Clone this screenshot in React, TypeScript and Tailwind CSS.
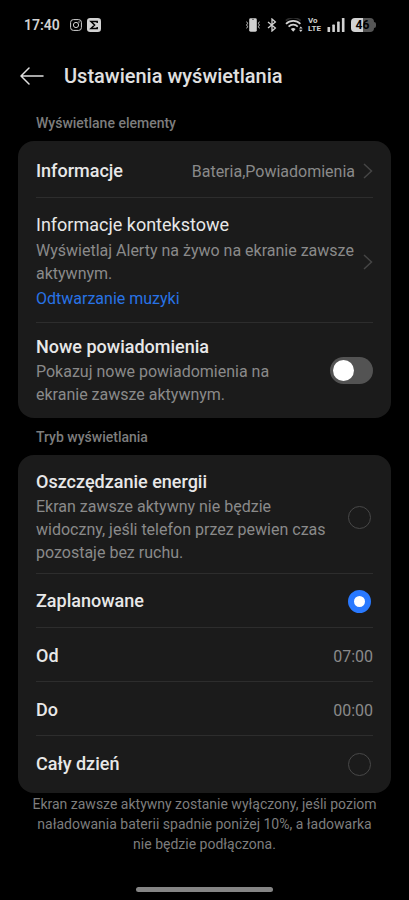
import React, { useState } from 'react';

type DisplayMode = 'saving' | 'scheduled' | 'allDay';

const TITLE = 'text-[18px] leading-6 text-[#e8e8e8]';
const DESC = 'text-[16px] leading-[23px] text-[#8a8a8a]';
const DIVIDER = 'border-b border-[#2d2d2d]';

function Chevron() {
  return (
    <svg viewBox="0 0 10 16" className="h-4 w-[10px] shrink-0" fill="none" stroke="#454545" strokeWidth="1.5" aria-hidden="true">
      <path d="M1 1l7.5 7L1 15" />
    </svg>
  );
}

function StatusBar() {
  return (
    <div className="flex h-[49px] items-center justify-between pl-6 pr-[33px] text-[#d2d2d2]">
      <div className="flex items-center">
        <span className="text-[14px] leading-5 font-semibold">17:40</span>
        <svg viewBox="0 0 12 12" className="ml-[10px] size-3" fill="none" stroke="currentColor" aria-label="Instagram">
          <rect x="0.6" y="0.6" width="10.8" height="10.8" rx="2.8" strokeWidth="1" />
          <circle cx="6" cy="6" r="2.6" strokeWidth="1" />
          <circle cx="9" cy="3" r="0.7" fill="currentColor" stroke="none" />
        </svg>
        <svg viewBox="0 0 14 14" className="ml-[5px] size-[14px]" aria-hidden="true">
          <rect width="14" height="14" rx="3.2" fill="currentColor" />
          <path d="M10.2 5V3.6H4L7.6 7 4 10.4h6.2V9" fill="none" stroke="#000" strokeWidth="1.5" />
        </svg>
      </div>

      <div className="flex items-center">
        <svg viewBox="0 0 14 14" className="h-[14px] w-[14px]" fill="none" stroke="currentColor" aria-label="Wibracje">
          <rect x="3.2" y="0.3" width="7.6" height="13.4" rx="1.4" fill="currentColor" stroke="none" />
          <path d="M6 1.4h2" stroke="#555" strokeWidth="0.8" />
          <path d="M0.6 3.6l1 1.7-1 1.7 1 1.7-1 1.7M13.4 3.6l-1 1.7 1 1.7-1 1.7 1 1.7" strokeWidth="0.9" />
        </svg>
        <svg viewBox="0 0 10 14" className="ml-[7px] h-[14px] w-[10px]" fill="none" stroke="currentColor" strokeWidth="1.3" aria-label="Bluetooth">
          <path d="M1 4l7.4 6L5 13V1l3.4 3L1 10" />
        </svg>
        <svg viewBox="0 0 18 14" className="ml-[8px] h-[14px] w-[18px]" fill="none" stroke="currentColor" aria-label="Wi-Fi">
          <path d="M0.8 2.6a11.4 11.4 0 0 1 14.8 0" stroke="#2c2c2c" strokeWidth="1.5" />
          <path d="M1 5.8a10.4 10.4 0 0 1 14.4 0" strokeWidth="1.7" />
          <path d="M3.6 8.6a6.5 6.5 0 0 1 9.2 0" strokeWidth="1.7" />
          <path d="M5.8 11a3.6 3.6 0 0 1 4.8 0L8.2 13.8z" fill="currentColor" stroke="none" />
          <path d="M14 10.6l1.8-2.2 1.8 2.2zM14 11.8l1.8 2.2 1.8-2.2z" fill="currentColor" stroke="none" />
        </svg>
        <span className="ml-[5px] flex w-[14px] flex-col text-[8px] leading-[8px] font-bold">
          <span>Vo</span>
          <span>LTE</span>
        </span>
        <svg viewBox="0 0 18 14" className="ml-[5px] h-[14px] w-[18px]" fill="currentColor" aria-label="Zasięg">
          <rect x="0.5" y="9" width="2.6" height="5" rx="0.6" />
          <rect x="5.3" y="6.6" width="2.6" height="7.4" rx="0.6" />
          <rect x="10.1" y="3.6" width="2.6" height="10.4" rx="0.6" />
          <rect x="14.9" y="0" width="2.6" height="14" rx="0.6" />
        </svg>
        <div className="ml-[6px] flex items-center">
          <div className="flex h-[14px] w-[23px] items-center justify-center rounded-[4px] bg-linear-to-r from-[#d2d2d2] from-50% to-[#555555] to-50% text-[12px] leading-[14px] font-bold text-black">
            46
          </div>
          <div className="h-[6px] w-[2px] rounded-r-[2px] bg-[#555555]" />
        </div>
      </div>
    </div>
  );
}

interface RadioRowProps {
  id: DisplayMode;
  title: string;
  description?: string;
  checked: boolean;
  onSelect: (id: DisplayMode) => void;
  className: string;
}

function RadioRow({ id, title, description, checked, onSelect, className }: RadioRowProps) {
  return (
    <label htmlFor={id} className={`${className} flex items-center justify-between gap-4`}>
      <span className="flex flex-col">
        <span className={`${TITLE} font-medium`}>{title}</span>
        {description && <span className={`${DESC} mt-px`}>{description}</span>}
      </span>
      <input
        id={id}
        type="radio"
        name="display-mode"
        checked={checked}
        onChange={() => onSelect(id)}
        className="mr-[2px] size-[23px] shrink-0 appearance-none rounded-full border border-[#484848] checked:border-[6px] checked:border-[#2979ff] checked:bg-white"
      />
    </label>
  );
}

function TimeRow({ label, value }: { label: string; value: string }) {
  return (
    <button type="button" className={`${DIVIDER} flex w-full items-center justify-between pt-4 pb-[13px]`}>
      <span className={`${TITLE} font-medium`}>{label}</span>
      <span className={DESC}>{value}</span>
    </button>
  );
}

function SectionLabel({ children }: { children: React.ReactNode }) {
  return <h2 className="px-[18px] pt-[10px] pb-2 text-[14px] leading-[19px] font-medium text-[#7d7d7d]">{children}</h2>;
}

export default function App() {
  const [notifications, setNotifications] = useState(false);
  const [mode, setMode] = useState<DisplayMode>('scheduled');

  return (
    <div className="flex min-h-screen flex-col bg-black font-['Roboto',sans-serif]">
      <StatusBar />

      <header className="flex h-[55px] items-center gap-5 px-5 pb-[2px]">
        <button type="button" aria-label="Wstecz">
          <svg viewBox="0 0 24 18" className="h-[18px] w-6" fill="none" stroke="#e0e0e0" strokeWidth="1.5" strokeLinecap="round" strokeLinejoin="round">
            <path d="M23 9H1M9 1L1 9l8 8" />
          </svg>
        </button>
        <h1 className="text-[20px] leading-7 font-medium text-[#e0e0e0]">Ustawienia wyświetlania</h1>
      </header>

      <main className="px-[18px]">
        {/* Wyświetlane elementy */}
        <SectionLabel>Wyświetlane elementy</SectionLabel>
        <section className="rounded-[16px] bg-[#1b1b1b] px-[18px]">
          <button type="button" className={`${DIVIDER} flex w-full items-center justify-between pt-[18px] pb-[14px]`}>
            <span className={`${TITLE} font-medium`}>Informacje</span>
            <span className="flex items-center gap-2">
              <span className={DESC}>Bateria,Powiadomienia</span>
              <Chevron />
            </span>
          </button>

          <div className={`${DIVIDER} flex items-center justify-between gap-2 pt-[15px] pb-[11px]`}>
            <div>
              <h3 className={TITLE}>Informacje kontekstowe</h3>
              <p className={`${DESC} mt-[2px]`}>Wyświetlaj Alerty na żywo na ekranie zawsze aktywnym.</p>
              <a href="#muzyka" className="mt-[2px] block text-[16px] leading-6 text-[#2873e6]">Odtwarzanie muzyki</a>
            </div>
            <button type="button" aria-label="Informacje kontekstowe">
              <Chevron />
            </button>
          </div>

          <label htmlFor="notifications" className="flex items-center justify-between gap-10 pt-3 pb-3">
            <span className="flex flex-col">
              <span className={`${TITLE} font-medium`}>Nowe powiadomienia</span>
              <span className={`${DESC} mt-px`}>Pokazuj nowe powiadomienia na ekranie zawsze aktywnym.</span>
            </span>
            <input
              id="notifications"
              type="checkbox"
              role="switch"
              checked={notifications}
              onChange={(e) => setNotifications(e.target.checked)}
              className="flex h-[27px] w-[43px] shrink-0 appearance-none items-center rounded-full bg-[#535353] px-[3px] before:size-[21px] before:rounded-full before:bg-white checked:justify-end checked:bg-[#2979ff]"
            />
          </label>
        </section>

        {/* Tryb wyświetlania */}
        <SectionLabel>Tryb wyświetlania</SectionLabel>
        <section className="rounded-[16px] bg-[#1b1b1b] px-[18px]">
          <RadioRow
            id="saving"
            title="Oszczędzanie energii"
            description="Ekran zawsze aktywny nie będzie widoczny, jeśli telefon przez pewien czas pozostaje bez ruchu."
            checked={mode === 'saving'}
            onSelect={setMode}
            className={`${DIVIDER} pt-[15px] pb-[9px]`}
          />
          <RadioRow
            id="scheduled"
            title="Zaplanowane"
            checked={mode === 'scheduled'}
            onSelect={setMode}
            className={`${DIVIDER} pt-[15px] pb-[14px]`}
          />
          <TimeRow label="Od" value="07:00" />
          <TimeRow label="Do" value="00:00" />
          <RadioRow
            id="allDay"
            title="Cały dzień"
            checked={mode === 'allDay'}
            onSelect={setMode}
            className="pt-4 pb-[17px]"
          />
        </section>

        <p className="px-3 pt-px text-center text-[14px] leading-5 text-[#7d7d7d]">
          Ekran zawsze aktywny zostanie wyłączony, jeśli poziom naładowania baterii spadnie poniżej 10%, a ładowarka nie będzie podłączona.
        </p>
      </main>

      <div className="mt-auto mb-2 h-[5px] w-1/3 self-center rounded-full bg-[#858585]" />
    </div>
  );
}
